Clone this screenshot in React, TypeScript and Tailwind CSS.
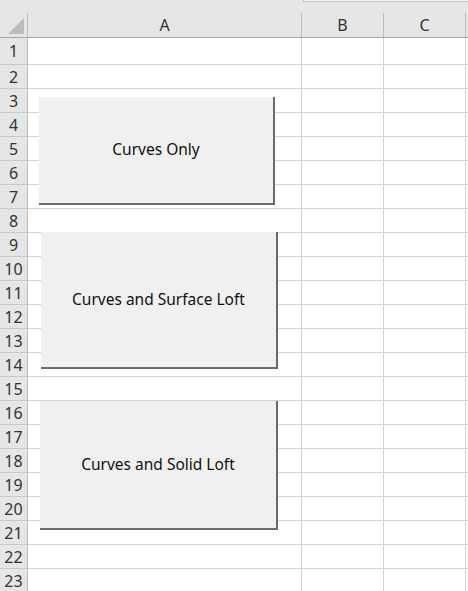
import React from "react";

const rows = Array.from({ length: 23 }, (_, i) => i + 1);

type Btn = { label: string; pos: string };

const buttons: Btn[] = [
  { label: "Curves Only", pos: "left-[39px] top-[97px] w-[236px] h-[108px]" },
  { label: "Curves and Surface Loft", pos: "left-[41px] top-[232px] w-[237px] h-[137px]" },
  { label: "Curves and Solid Loft", pos: "left-[40px] top-[401px] w-[238px] h-[129px]" },
];

const font = { fontFamily: '"Noto Sans", "Open Sans", sans-serif' };

export default function App() {
  return (
    <div className="relative w-[468px] h-[591px] overflow-hidden bg-white" style={font}>
      {/* top strip (bottom of formula bar) */}
      <div className="h-[13px] bg-[#e6e6e6]">
        <div className="ml-[303px] h-[2px] bg-[#f7f7f7] border-l border-b border-[#c8c8c8]" />
      </div>

      {/* column headers */}
      <div className="grid grid-cols-[28px_274px_82px_82px_2px] bg-[#e6e6e6] border-b border-[#a6a6a6] text-[16px] text-[#333]">
        <div className="h-[24px] border-r border-[#bdbdbd] relative">
          <div className="absolute left-[8px] top-[5px] w-0 h-0 border-l-[16px] border-l-transparent border-b-[16px] border-b-[#bcbcbc]" />
        </div>
        <div className="h-[24px] border-r border-[#bdbdbd] flex items-center justify-center leading-none">A</div>
        <div className="h-[24px] border-r border-[#bdbdbd] flex items-center justify-center leading-none">B</div>
        <div className="h-[24px] border-r border-[#bdbdbd] flex items-center justify-center leading-none">C</div>
        <div className="h-[24px]" />
      </div>

      {/* rows */}
      {rows.map((r) => (
        <div key={r} className="grid grid-cols-[28px_274px_82px_82px_2px]">
          <div
            className={`${r === 1 ? "h-[27px]" : "h-[24px]"} bg-[#e6e6e6] border-r border-b border-r-[#bdbdbd] border-b-[#c8c8c8] flex items-center justify-center text-[16px] text-[#333] leading-none`}
          >
            {r}
          </div>
          <div className={`${r === 1 ? "h-[27px]" : "h-[24px]"} border-r border-b border-[#d4d4d4]`} />
          <div className={`${r === 1 ? "h-[27px]" : "h-[24px]"} border-r border-b border-[#d4d4d4]`} />
          <div className={`${r === 1 ? "h-[27px]" : "h-[24px]"} border-r border-b border-[#d4d4d4]`} />
          <div className={`${r === 1 ? "h-[27px]" : "h-[24px]"} border-b border-[#d4d4d4]`} />
        </div>
      ))}

      {/* form buttons floating over the sheet */}
      {buttons.map((b) => (
        <button
          key={b.label}
          className={`absolute ${b.pos} bg-[#f0f0f0] border-r-2 border-b-2 border-[#6b6b6b] flex items-center justify-center text-[15.5px] text-[#111]`}
        >
          {b.label}
        </button>
      ))}
    </div>
  );
}
